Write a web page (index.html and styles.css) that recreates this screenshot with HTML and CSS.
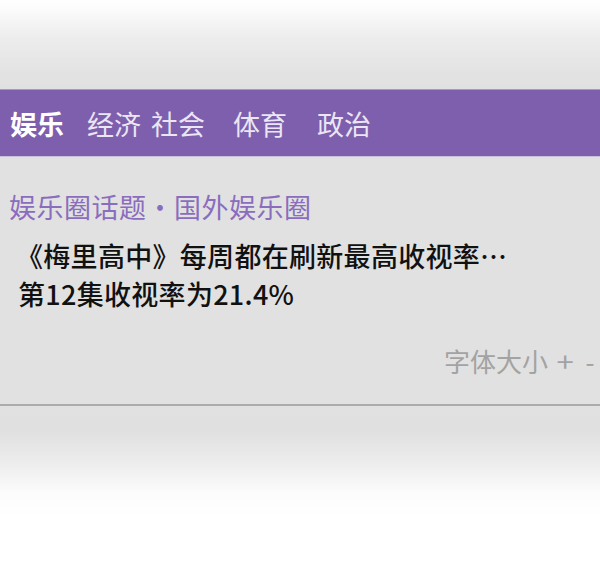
FILE: index.html
```html
<!DOCTYPE html>
<html lang="zh-CN">
<head>
<meta charset="utf-8">
<title>娱乐</title>
<link rel="stylesheet" href="styles.css">
</head>
<body>
<div class="screen">
  <div class="top-fade"></div>
  <nav class="tabs">
    <span class="tab tab-active">娱乐</span>
    <span class="tab">经济</span>
    <span class="tab">社会</span>
    <span class="tab">体育</span>
    <span class="tab">政治</span>
  </nav>
  <section class="article">
    <div class="crumb">娱乐圈话题・国外娱乐圈</div>
    <h1 class="headline">
      <span class="line">《梅里高中》每周都在刷新最高收视率…</span>
      <span class="line line-sub">第12集收视率为21.4%</span>
    </h1>
    <div class="font-size">字体大小<span class="size-btn size-up">+</span><span class="size-btn size-down">-</span></div>
  </section>
  <div class="bottom-fade"></div>
</div>
</body>
</html>
```

FILE: styles.css
```css
html, body {
  margin: 0;
  padding: 0;
}

body {
  width: 600px;
  height: 567px;
  overflow: hidden;
  background: #ffffff;
  font-family: "Noto Sans CJK SC", "Noto Sans", sans-serif;
}

.screen {
  display: flex;
  flex-direction: column;
  height: 567px;
}

.top-fade {
  height: 89px;
  background: linear-gradient(to bottom, #ffffff 0px, #fafafa 12px, #ececec 40px, #e2e2e2 75px, #e1e1e1 89px);
}

.tabs {
  display: flex;
  align-items: center;
  height: 66px;
  padding-left: 10px;
  background: #7e5fae;
  border-top: 1px solid #a996cb;
  border-bottom: 1px solid #c9bedc;
}

.tab {
  font-size: 27px;
  line-height: 1;
  color: #ebe6f3;
  white-space: nowrap;
}

.tab-active {
  color: #ffffff;
  font-weight: 700;
}

.tab:nth-child(2) { margin-left: 23px; }
.tab:nth-child(3) { margin-left: 10px; }
.tab:nth-child(4) { margin-left: 28px; }
.tab:nth-child(5) { margin-left: 30px; }

.article {
  background: #e1e1e1;
  padding: 32px 0 0 0;
  height: 215px;
  border-bottom: 2px solid #ababab;
  display: flex;
  flex-direction: column;
}

.crumb {
  padding-left: 9px;
  font-size: 27px;
  line-height: 36px;
  letter-spacing: 0.5px;
  color: #8a6dbd;
  white-space: nowrap;
}

.headline {
  margin: 12px 0 0 0;
  padding-left: 16px;
  font-size: 27px;
  line-height: 38px;
  font-weight: 500;
  color: #111111;
  display: flex;
  flex-direction: column;
  letter-spacing: 0.3px;
}

.line {
  white-space: nowrap;
}

.line-sub {
  padding-left: 2px;
}

.font-size {
  margin-top: 30px;
  padding-left: 444px;
  font-size: 26px;
  line-height: 36px;
  color: #a3a3a3;
  white-space: nowrap;
}

.size-btn {
  display: inline-block;
}

.size-up {
  margin-left: 10px;
  transform: scaleX(1.2);
}

.size-down {
  margin-left: 13px;
}

.bottom-fade {
  flex: 1;
  background: linear-gradient(to bottom, #e1e1e1 0px, #e0e0e0 25px, #ececec 55px, #fbfbfb 85px, #ffffff 110px);
}
```
